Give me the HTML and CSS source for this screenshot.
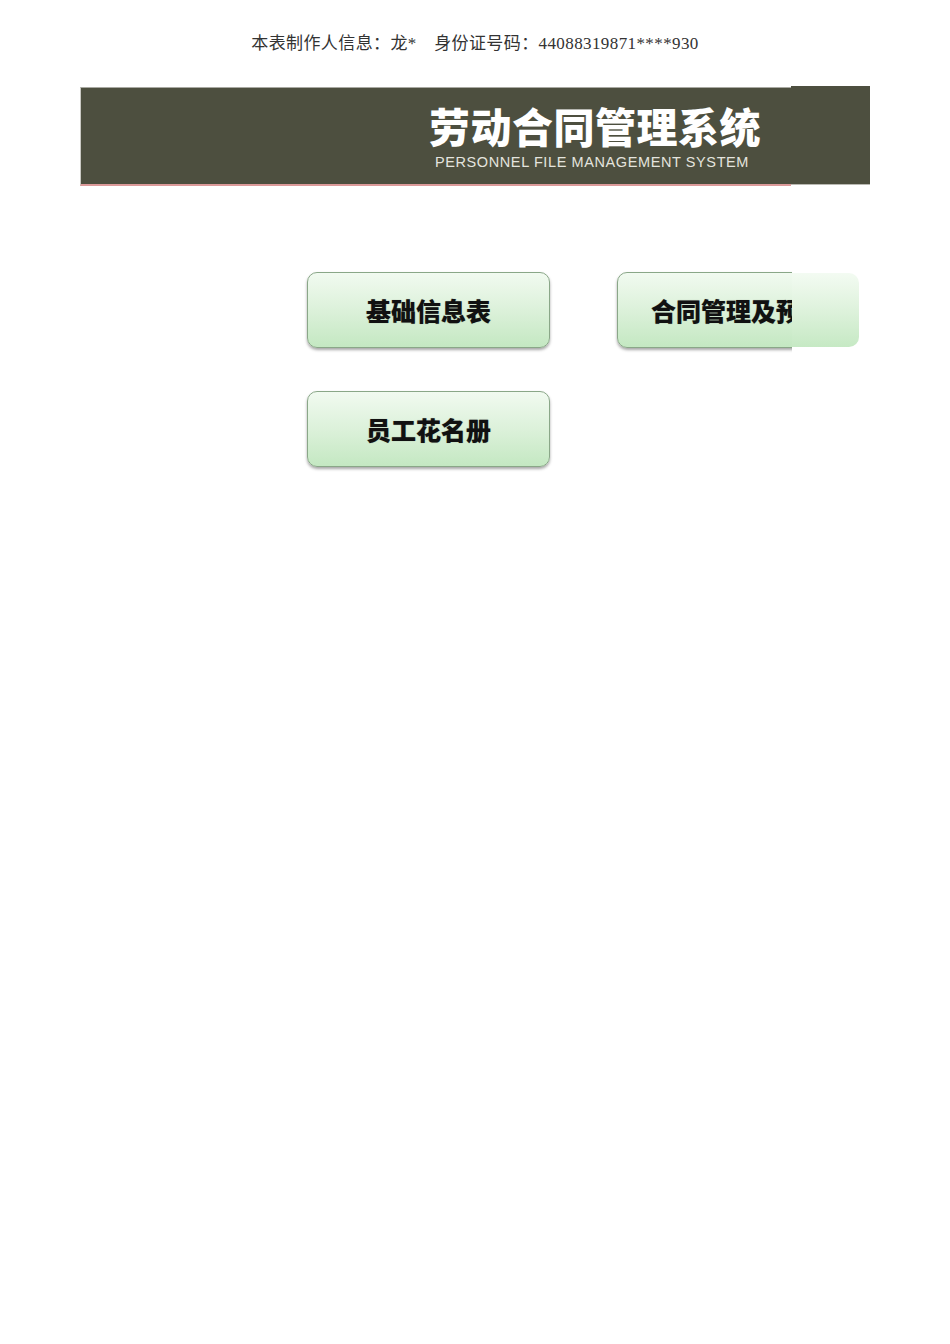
FILE: index.html
```html
<!DOCTYPE html>
<html lang="zh-CN">
<head>
<meta charset="utf-8">
<title>劳动合同管理系统</title>
<link rel="stylesheet" href="styles.css">
</head>
<body>
<div class="page">
  <p class="top-note">本表制作人信息：龙*　身份证号码：44088319871****930</p>
  <div class="masthead">
    <div class="banner">
      <div class="banner-titles">
        <div class="title">劳动合同管理系统</div>
        <div class="subtitle">PERSONNEL FILE MANAGEMENT SYSTEM</div>
      </div>
    </div>
    <div class="banner-ext"></div>
  </div>
  <div class="menu">
    <div class="btn">基础信息表</div>
    <div class="btn btn-clipped">
      <span class="btn-label">合同管理及预警</span>
      <span class="clip-cover"><span class="clip-fill"></span></span>
    </div>
    <div class="btn">员工花名册</div>
  </div>
</div>
</body>
</html>
```

FILE: styles.css
```css
html, body {
  margin: 0;
  padding: 0;
  background: #ffffff;
}

.page {
  width: 950px;
  min-height: 1344px;
  font-family: "Noto Sans CJK SC", "Noto Sans", sans-serif;
}

.top-note {
  margin: 0;
  padding-top: 34px;
  height: 20px;
  line-height: 20px;
  text-align: center;
  font-family: "Liberation Serif", "Noto Sans CJK SC", serif;
  font-size: 17px;
  letter-spacing: 0.4px;
  color: #333333;
}

.masthead {
  display: flex;
  align-items: flex-start;
  margin-top: 32px;
  margin-left: 80px;
}

.banner {
  box-sizing: border-box;
  width: 711px;
  height: 99px;
  margin-top: 1px;
  background: #4d4f3f;
  border-top: 1px solid #a9a9a2;
  border-left: 1px solid #c9c9c3;
  border-bottom: 2px solid #dc9a9a;
  display: flex;
  justify-content: flex-end;
  padding-right: 30px;
}

.banner-titles {
  display: flex;
  flex-direction: column;
  align-items: center;
  padding-top: 13px;
}

.title {
  font-family: "Noto Sans CJK SC", sans-serif;
  font-weight: 900;
  font-size: 41px;
  line-height: 48px;
  color: #ffffff;
  letter-spacing: 0.5px;
}

.subtitle {
  font-family: "Liberation Sans", Arial, sans-serif;
  font-size: 14.5px;
  line-height: 16px;
  color: #e4e4de;
  letter-spacing: 0.6px;
  margin-top: 5px;
  margin-right: 6px;
}

.banner-ext {
  box-sizing: border-box;
  width: 79px;
  height: 99px;
  background: #4d4f3f;
  border-bottom: 1px solid #b9b9b2;
}

.menu {
  display: grid;
  grid-template-columns: 243px 243px;
  column-gap: 67px;
  row-gap: 43px;
  margin-top: 86px;
  margin-left: 307px;
}

.btn {
  position: relative;
  box-sizing: border-box;
  height: 76px;
  border: 1px solid #8aa788;
  border-radius: 10px;
  background: linear-gradient(to bottom, #f1faf0 0%, #dcf1da 50%, #c4e8c2 100%);
  box-shadow: 0 2px 3px rgba(0, 0, 0, 0.35);
  display: flex;
  align-items: center;
  justify-content: center;
  font-family: "Noto Sans CJK SC", sans-serif;
  font-weight: 900;
  font-size: 25px;
  color: #111111;
  text-shadow: 0 0 1px rgba(0, 0, 0, 0.35);
}

.btn-label {
  white-space: nowrap;
}

.clip-cover {
  position: absolute;
  left: 174px;
  top: -4px;
  right: -6px;
  bottom: -8px;
  background: #ffffff;
  padding: 4px 6px 8px 0;
  display: flex;
}

.clip-fill {
  flex: 1;
  border-radius: 0 10px 10px 0;
  background: linear-gradient(to bottom, #f3fbf2 0%, #def2dc 50%, #c6e9c4 100%);
}
```
